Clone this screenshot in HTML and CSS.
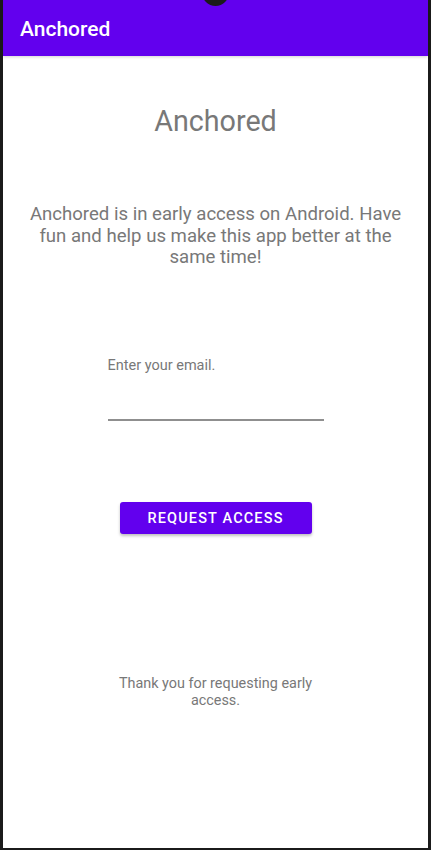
FILE: index.html
```html
<!DOCTYPE html>
<html lang="en">
<head>
<meta charset="utf-8">
<title>Anchored</title>
<link rel="stylesheet" href="styles.css">
</head>
<body>
<div class="device">
  <div class="screen">
    <header class="appbar">
      <span class="appbar-title">Anchored</span>
      <span class="notch"></span>
    </header>
    <main class="content">
      <h1 class="heading">Anchored</h1>
      <p class="intro">Anchored is in early access on Android. Have fun and help us make this app better at the same time!</p>
      <div class="field">
        <label class="field-label" for="email">Enter your email.</label>
        <input class="field-input" id="email" type="email">
      </div>
      <button class="btn" type="button">Request Access</button>
      <p class="thanks">Thank you for requesting early access.</p>
    </main>
  </div>
</div>
</body>
</html>
```

FILE: styles.css
```css
html, body {
  margin: 0;
  padding: 0;
  height: 100%;
}
body {
  background: #1b1b1b;
  font-family: Roboto, "Liberation Sans", sans-serif;
}
.device {
  height: 850px;
  padding: 0 3px 2px 3px;
  box-sizing: border-box;
}
.screen {
  background: #ffffff;
  height: 100%;
  display: flex;
  flex-direction: column;
}
.appbar {
  position: relative;
  height: 56px;
  background: #6200ee;
  display: flex;
  align-items: center;
  padding: 0 0 0 17px;
  box-shadow: 0 1px 3px rgba(0,0,0,0.18);
  flex-shrink: 0;
}
.appbar-title {
  color: #ffffff;
  font-size: 21px;
  font-weight: 500;
  line-height: 24px;
  margin-top: 2px;
}
.notch {
  position: absolute;
  left: 199px;
  top: -21px;
  width: 27px;
  height: 27px;
  border-radius: 50%;
  background: #1b1b1b;
}
.content {
  display: flex;
  flex-direction: column;
  align-items: center;
}
.heading {
  margin: 49px 0 0 0;
  font-size: 28.7px;
  font-weight: 400;
  line-height: 32px;
  color: #787878;
  text-align: center;
}
.intro {
  margin: 67px 0 0 0;
  padding: 0 20px;
  font-size: 18.6px;
  line-height: 21.7px;
  color: #787878;
  text-align: center;
}
.field {
  margin-top: 89px;
  width: 216px;
  display: flex;
  flex-direction: column;
}
.field-label {
  font-size: 14.5px;
  line-height: 16px;
  color: #787878;
}
.field-input {
  margin-top: 27px;
  height: 18px;
  border: none;
  border-bottom: 2px solid #8f8f8f;
  padding: 0;
  outline: none;
  background: transparent;
}
.btn {
  margin-top: 81px;
  width: 192px;
  height: 32px;
  border: none;
  border-radius: 3px;
  background: #6200ee;
  color: #ffffff;
  font-family: Roboto, "Liberation Sans", sans-serif;
  font-size: 14.5px;
  font-weight: 500;
  letter-spacing: 1.15px;
  text-transform: uppercase;
  box-shadow: 0 2px 3px rgba(0,0,0,0.25);
  padding: 0;
}
.thanks {
  margin: 142px 0 0 0;
  width: 200px;
  font-size: 14.4px;
  line-height: 16.5px;
  color: #787878;
  text-align: center;
}
```
